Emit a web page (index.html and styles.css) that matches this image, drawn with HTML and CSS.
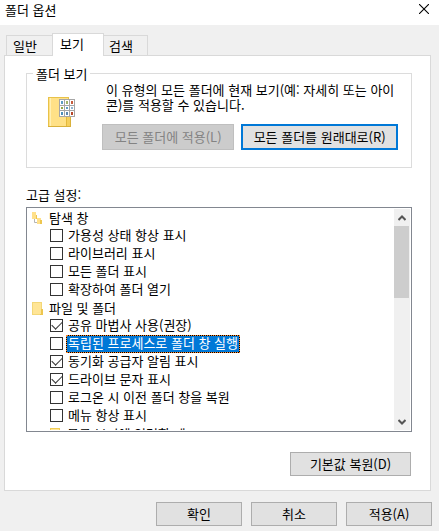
FILE: index.html
```html
<!DOCTYPE html>
<html lang="ko">
<head>
<meta charset="utf-8">
<title>폴더 옵션</title>
<link rel="stylesheet" href="styles.css">
</head>
<body>
<main class="dialog">
  <header class="titlebar">
    <h1 class="title">폴더 옵션</h1>
    <button class="close" type="button" aria-label="닫기">
      <svg width="10" height="10" viewBox="0 0 10 10"><path d="M0 0L10 10M10 0L0 10" fill="none" stroke="#000" stroke-width="1.1"/></svg>
    </button>
  </header>

  <div class="tabs" role="tablist">
    <button class="tab" type="button" role="tab" aria-selected="false">일반</button>
    <button class="tab tab-active" type="button" role="tab" aria-selected="true">보기</button>
    <button class="tab" type="button" role="tab" aria-selected="false">검색</button>
  </div>

  <section class="panel" role="tabpanel">
    <fieldset class="group">
      <legend class="legend">폴더 보기</legend>
      <svg class="folder-view" width="28" height="31" viewBox="0 0 28 31">
        <rect x="0.5" y="0.5" width="20" height="29" fill="#ffe187" stroke="#e8c24a"/>
        <path d="M2.5 1V29" stroke="#fff0b5"/>
        <path d="M18.5 18V29" stroke="#e4b93c"/>
        <rect x="19" y="18" width="4" height="12" fill="#f5cf5c"/>
        <path d="M0 29.5H23M22.5 18V30" stroke="#d9b13b" fill="none"/>
        <rect x="11" y="2" width="16" height="18" fill="#a6a6a6"/>
        <g fill="#fff">
          <rect x="12" y="3" width="4" height="5"/><rect x="17" y="3" width="4" height="5"/><rect x="22" y="3" width="4" height="5"/>
          <rect x="12" y="9" width="4" height="4"/><rect x="17" y="9" width="4" height="4"/><rect x="22" y="9" width="4" height="4"/>
          <rect x="12" y="14" width="4" height="5"/><rect x="17" y="14" width="4" height="5"/><rect x="22" y="14" width="4" height="5"/>
        </g>
        <g>
          <rect x="13" y="4" width="2" height="3" fill="#5e9cc4"/><rect x="18" y="4" width="2" height="3" fill="#a0b56c"/><rect x="23" y="4" width="2" height="3" fill="#c75b3c"/>
          <rect x="13" y="10" width="2" height="2" fill="#92a648"/><rect x="18" y="10" width="2" height="2" fill="#5e9cc4"/><rect x="23" y="10" width="2" height="2" fill="#8fb4d0"/>
          <rect x="13" y="15" width="2" height="3" fill="#4d8fba"/><rect x="18" y="15" width="2" height="3" fill="#5e88b0"/><rect x="23" y="15" width="2" height="3" fill="#b84628"/>
        </g>
      </svg>
      <div class="group-body">
        <p class="desc">이 유형의 모든 폴더에 현재 보기(예: 자세히 또는 아이콘)를 적용할 수 있습니다.</p>
        <div class="group-actions">
          <button class="btn btn-apply-all" type="button" disabled>모든 폴더에 적용(L)</button>
          <button class="btn btn-default" type="button">모든 폴더를 원래대로(R)</button>
        </div>
      </div>
    </fieldset>

    <h2 class="list-label" id="advanced">고급 설정:</h2>
    <div class="list">
      <ul class="tree" aria-labelledby="advanced">
        <li class="row heading">
          <svg width="11" height="13" viewBox="0 0 11 13">
            <path d="M2.5 7V10.5H5" fill="none" stroke="#b5b5b5"/>
            <rect x="0" y="0" width="4" height="7" fill="#ffe08a"/><rect x="4" y="3" width="1" height="4" fill="#edc64f"/>
            <rect x="5" y="6" width="4" height="6" fill="#ffe08a"/><rect x="8" y="8" width="2" height="4" fill="#edc64f"/>
          </svg><span class="heading-text">탐색 창</span></li>
        <li class="row"><label class="item"><input class="check" type="checkbox"><span class="text">가용성 상태 항상 표시</span></label></li>
        <li class="row"><label class="item"><input class="check" type="checkbox"><span class="text">라이브러리 표시</span></label></li>
        <li class="row"><label class="item"><input class="check" type="checkbox"><span class="text">모든 폴더 표시</span></label></li>
        <li class="row"><label class="item"><input class="check" type="checkbox"><span class="text">확장하여 폴더 열기</span></label></li>
        <li class="row heading">
          <svg width="11" height="13" viewBox="0 0 11 13">
            <rect x="0.5" y="0.5" width="9" height="12" fill="#ffe596" stroke="#f3d778"/>
            <path d="M9 7H11V13H8V12H9Z" fill="#edc64f"/>
          </svg><span class="heading-text">파일 및 폴더</span></li>
        <li class="row"><label class="item"><input class="check" type="checkbox" checked><span class="text">공유 마법사 사용(권장)</span></label></li>
        <li class="row"><label class="item"><input class="check" type="checkbox"><span class="text selected">독립된 프로세스로 폴더 창 실행</span></label></li>
        <li class="row"><label class="item"><input class="check" type="checkbox" checked><span class="text">동기화 공급자 알림 표시</span></label></li>
        <li class="row"><label class="item"><input class="check" type="checkbox" checked><span class="text">드라이브 문자 표시</span></label></li>
        <li class="row"><label class="item"><input class="check" type="checkbox"><span class="text">로그온 시 이전 폴더 창을 복원</span></label></li>
        <li class="row"><label class="item"><input class="check" type="checkbox"><span class="text">메뉴 항상 표시</span></label></li>
        <li class="row heading nested">
          <svg width="11" height="13" viewBox="0 0 11 13">
            <rect x="0.5" y="0.5" width="9" height="12" fill="#ffe596" stroke="#f0cc55"/>
          </svg><span class="heading-text">목록 보기에 입력할 때</span></li>
      </ul>
      <div class="scrollbar">
        <button class="arrow" type="button" aria-label="위로">
          <svg width="8" height="6" viewBox="0 0 8 6"><path d="M0.5 5L4 1.5L7.5 5" fill="none" stroke="#555" stroke-width="2"/></svg>
        </button>
        <div class="thumb"></div>
        <button class="arrow arrow-down" type="button" aria-label="아래로">
          <svg width="8" height="6" viewBox="0 0 8 6"><path d="M0.5 1L4 4.5L7.5 1" fill="none" stroke="#555" stroke-width="2"/></svg>
        </button>
      </div>
    </div>
    <div class="restore">
      <button class="btn btn-restore" type="button">기본값 복원(D)</button>
    </div>
  </section>

  <footer class="footer">
    <button class="btn btn-footer" type="button">확인</button>
    <button class="btn btn-footer" type="button">취소</button>
    <button class="btn btn-footer" type="button">적용(A)</button>
  </footer>
</main>
</body>
</html>
```
FILE: styles.css
```css
* {
  box-sizing: border-box;
}

body {
  margin: 0;
  background: #f0f0f0;
  color: #000;
  font: 13px/15px "Noto Sans CJK KR", sans-serif;
}

button {
  font: inherit;
  color: inherit;
  padding: 0;
}

h1,
h2,
p,
ul {
  margin: 0;
  padding: 0;
  font-size: 13px;
  font-weight: 400;
}

.titlebar {
  display: flex;
  justify-content: space-between;
  align-items: flex-start;
  height: 25px;
  padding: 2px 10px 0 5px;
  background: #fff;
}

.close {
  display: flex;
  padding-top: 2px;
  border: 0;
  background: none;
}

.tabs {
  display: flex;
  align-items: flex-end;
  height: 31px;
  padding-left: 6px;
}

.tab {
  height: 21px;
  width: 46px;
  padding-right: 9px;
  border: 1px solid #d9d9d9;
  border-right: 0;
  background: #f0f0f0;
}

.tab:last-child {
  width: 44px;
  border-right: 1px solid #d9d9d9;
  border-left: 0;
}

/* The selected tab covers the top edge of the panel. */
.tab-active {
  position: relative;
  z-index: 1;
  height: 23px;
  width: 52px;
  padding: 0 12px 3px 0;
  border-right: 1px solid #d9d9d9;
  border-bottom: 0;
  background: #fff;
}

.panel {
  margin: -1px 8px 0 4px;
  padding: 10px 18px 14px 21px;
  border: 1px solid #d9d9d9;
  background: #fff;
}

.group {
  display: flex;
  min-width: 0;
  margin: 0;
  padding: 1px 13px 17px 21px;
  border: 1px solid #dcdcdc;
}

.legend {
  margin-left: -15px;
  padding: 0 3px;
}

.folder-view {
  flex: none;
  margin-top: 15px;
}

.group-body {
  flex: 1;
  padding-left: 26px;
}

.desc {
  padding-left: 4px;
}

.group-actions {
  display: flex;
  gap: 7px;
  margin-top: 12px;
}

.btn {
  border: 1px solid #adadad;
  background: #e1e1e1;
  white-space: nowrap;
}

.btn-apply-all {
  flex: 133;
  height: 26px;
  padding-bottom: 2px;
  border-color: #bfbfbf;
  background: #ccc;
  color: #838383;
}

.btn-default {
  flex: 156;
  height: 26px;
  padding-bottom: 2px;
  border: 2px solid #0078d7;
}

.list-label {
  margin-top: 19px;
  line-height: 15px;
}

.list {
  display: flex;
  height: 225px;
  margin-top: 5px;
  padding: 1px;
  border: 1px solid #828790;
}

.tree {
  flex: 1;
  overflow: hidden;
  list-style: none;
}

.row {
  display: flex;
  align-items: center;
  height: 18px;
  padding-left: 22px;
  white-space: nowrap;
}

.heading {
  gap: 6px;
  padding-left: 4px;
}

.heading-text {
  height: 18px;
  line-height: 17px;
}

.nested {
  padding-left: 22px;
}

.item {
  display: flex;
  align-items: center;
  gap: 3px;
}

.check {
  appearance: none;
  width: 13px;
  height: 13px;
  margin: 0 0 1px;
  border: 1px solid #333;
  background: #fff;
}

.check:checked::before {
  content: "";
  display: block;
  width: 9px;
  height: 5px;
  margin: 1px 0 0 1px;
  border: solid #333;
  border-width: 0 0 1px 1px;
  transform: rotate(-45deg);
}

.text {
  height: 18px;
  padding: 0 1px;
  border: 1px solid transparent;
  line-height: 14px;
}

.selected {
  border: 1px dotted #ff8728;
  background: linear-gradient(#0078d7, #0078d7) padding-box, #000;
  color: #fff;
}

.scrollbar {
  display: flex;
  flex-direction: column;
  width: 16px;
  background: #f0f0f0;
}

.arrow {
  display: flex;
  align-items: center;
  justify-content: center;
  height: 17px;
  border: 0;
  background: none;
}

.arrow-down {
  margin-top: auto;
}

.thumb {
  height: 72px;
  margin-right: 1px;
  background: #cdcdcd;
}

.restore {
  display: flex;
  justify-content: flex-end;
  margin-top: 20px;
  padding-right: 1px;
}

.btn-restore {
  width: 121px;
  height: 24px;
  padding-bottom: 1px;
}

.footer {
  display: flex;
  justify-content: flex-end;
  gap: 9px;
  padding: 11px 7px 5px;
}

.btn-footer {
  width: 86px;
  height: 24px;
  padding-bottom: 1px;
}
```
